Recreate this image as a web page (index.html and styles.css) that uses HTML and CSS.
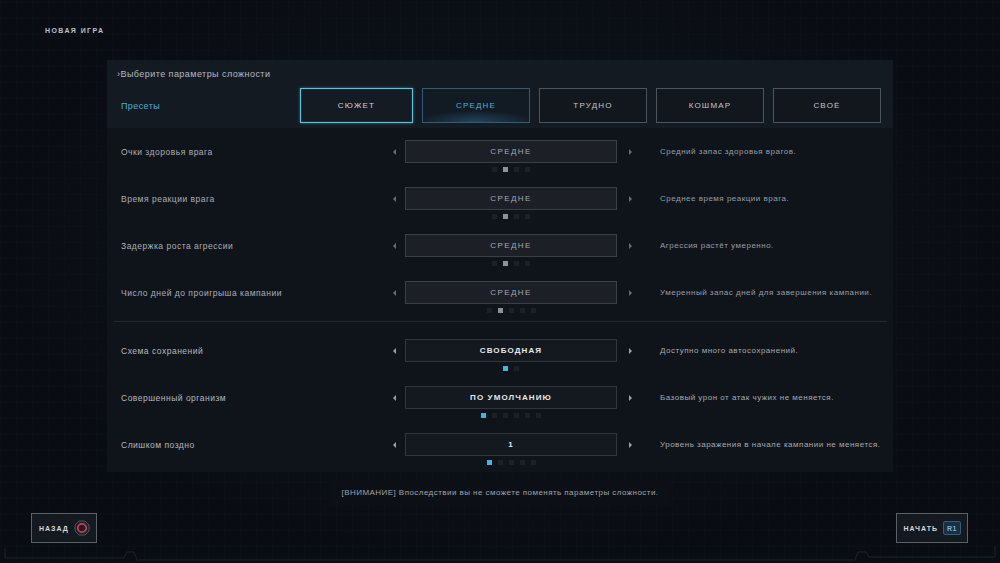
FILE: index.html
```html
<!DOCTYPE html>
<html lang="ru">
<head>
<meta charset="utf-8">
<title>Новая игра</title>
<link rel="stylesheet" href="styles.css">
</head>
<body>
<div class="screen">
  <header class="page-title">НОВАЯ ИГРА</header>

  <main class="panel">
    <section class="panel-head">
      <div class="subtitle">›Выберите параметры сложности</div>
      <div class="presets">
        <span class="presets-label">Пресеты</span>
        <div class="preset-list">
          <button class="preset preset-focus">СЮЖЕТ</button>
          <button class="preset preset-active">СРЕДНЕ</button>
          <button class="preset">ТРУДНО</button>
          <button class="preset">КОШМАР</button>
          <button class="preset">СВОЁ</button>
        </div>
      </div>
    </section>

    <section class="panel-body">
      <div class="row">
        <span class="label">Очки здоровья врага</span>
        <span class="arrow arrow-left"></span>
        <span class="value">СРЕДНЕ</span>
        <span class="arrow arrow-right"></span>
        <span class="desc">Средний запас здоровья врагов.</span>
        <span class="dots"><i></i><i class="on"></i><i></i><i></i></span>
      </div>
      <div class="row">
        <span class="label">Время реакции врага</span>
        <span class="arrow arrow-left"></span>
        <span class="value">СРЕДНЕ</span>
        <span class="arrow arrow-right"></span>
        <span class="desc">Среднее время реакции врага.</span>
        <span class="dots"><i></i><i class="on"></i><i></i><i></i></span>
      </div>
      <div class="row">
        <span class="label">Задержка роста агрессии</span>
        <span class="arrow arrow-left"></span>
        <span class="value">СРЕДНЕ</span>
        <span class="arrow arrow-right"></span>
        <span class="desc">Агрессия растёт умеренно.</span>
        <span class="dots"><i></i><i class="on"></i><i></i><i></i></span>
      </div>
      <div class="row row-last">
        <span class="label">Число дней до проигрыша кампании</span>
        <span class="arrow arrow-left"></span>
        <span class="value">СРЕДНЕ</span>
        <span class="arrow arrow-right"></span>
        <span class="desc">Умеренный запас дней для завершения кампании.</span>
        <span class="dots"><i></i><i class="on"></i><i></i><i></i><i></i></span>
      </div>

      <div class="separator"></div>

      <div class="row row-custom">
        <span class="label">Схема сохранений</span>
        <span class="arrow arrow-left"></span>
        <span class="value">СВОБОДНАЯ</span>
        <span class="arrow arrow-right"></span>
        <span class="desc">Доступно много автосохранений.</span>
        <span class="dots"><i class="on"></i><i></i></span>
      </div>
      <div class="row row-custom">
        <span class="label">Совершенный организм</span>
        <span class="arrow arrow-left"></span>
        <span class="value">ПО УМОЛЧАНИЮ</span>
        <span class="arrow arrow-right"></span>
        <span class="desc">Базовый урон от атак чужих не меняется.</span>
        <span class="dots"><i class="on"></i><i></i><i></i><i></i><i></i><i></i></span>
      </div>
      <div class="row row-custom row-last">
        <span class="label">Слишком поздно</span>
        <span class="arrow arrow-left"></span>
        <span class="value">1</span>
        <span class="arrow arrow-right"></span>
        <span class="desc">Уровень заражения в начале кампании не меняется.</span>
        <span class="dots"><i class="on"></i><i></i><i></i><i></i><i></i></span>
      </div>
    </section>
  </main>

  <div class="notice"><span>[ВНИМАНИЕ] Впоследствии вы не сможете поменять параметры сложности.</span></div>

  <footer class="footer">
    <button class="nav-btn">
      <span>НАЗАД</span>
      <svg class="btn-icon" width="16" height="16" viewBox="0 0 16 16">
        <polygon points="5,1 11,1 15,5 15,11 11,15 5,15 1,11 1,5" fill="#1b2128" stroke="#3d5860" stroke-width="1"/>
        <circle cx="8" cy="8" r="4.2" fill="none" stroke="#d8364c" stroke-width="1.8"/>
      </svg>
    </button>
    <button class="nav-btn">
      <span>НАЧАТЬ</span>
      <span class="badge">R1</span>
    </button>
  </footer>

  <svg class="frame-lines" width="1000" height="20" viewBox="0 0 1000 20">
    <path d="M5 5 V15 H124 L127 9 H134 L137 17 H855 L858 9 H866 L869 14 H995 V3" fill="none" stroke="#1a242d" stroke-width="1"/>
  </svg>
</div>
</body>
</html>
```

FILE: styles.css
```css
* { box-sizing: border-box; }

html, body {
  margin: 0;
  padding: 0;
}

body {
  background: #090d13;
  font-family: "Liberation Sans", Arial, sans-serif;
  color: #b9bec4;
  width: 1000px;
  height: 563px;
  overflow: hidden;
}

.screen {
  position: relative;
  width: 1000px;
  height: 563px;
  display: flex;
  flex-direction: column;
  background:
    radial-gradient(ellipse at 50% 45%, rgba(20, 28, 38, 0.55), rgba(0, 0, 0, 0) 70%),
    repeating-linear-gradient(0deg, rgba(255, 255, 255, 0.012) 0 1px, transparent 1px 16px),
    repeating-linear-gradient(90deg, rgba(255, 255, 255, 0.012) 0 1px, transparent 1px 16px),
    #090d13;
}

.page-title {
  padding: 26px 0 0 45px;
  height: 36px;
  font-size: 7px;
  line-height: 10px;
  letter-spacing: 1.4px;
  font-weight: bold;
  color: #b8c2cc;
}

.panel {
  margin: 24px auto 0;
  width: 786px;
  height: 412px;
  background: #0f141b;
  display: flex;
  flex-direction: column;
}

.panel-head {
  height: 68px;
  background: #141a22;
  padding: 8px 10px 0 10px;
}

.subtitle {
  height: 12px;
  font-size: 9px;
  line-height: 12px;
  letter-spacing: 0.45px;
  color: #b4bac1;
}

.presets {
  margin-top: 8px;
  display: flex;
  align-items: center;
}

.presets-label {
  width: 183px;
  padding-left: 4px;
  font-size: 9px;
  letter-spacing: 0.4px;
  color: #4aaed8;
}

.preset-list {
  display: flex;
  gap: 9px;
}

.preset {
  width: 108px;
  height: 35px;
  background: #12171e;
  border: 1px solid #4e545b;
  color: #c2c6ca;
  font-family: "Liberation Sans", Arial, sans-serif;
  font-size: 8px;
  font-weight: normal;
  letter-spacing: 1.2px;
  padding: 0;
}

.preset-focus {
  width: 113px;
  border: 1px solid #5cc4dc;
  box-shadow: 0 0 3px rgba(92, 196, 220, 0.5), inset 0 0 2px rgba(92, 196, 220, 0.35);
  background: #141b23;
  color: #cfd4d8;
}

.preset-active {
  border-color: #2f5d75;
  color: #4fb0dc;
  background:
    radial-gradient(ellipse 55% 35% at 50% 100%, rgba(60, 150, 190, 0.35), rgba(0, 0, 0, 0) 100%),
    #121a24;
}

.panel-body {
  flex: 1;
  padding: 12px 0 0 14px;
}

.row {
  display: grid;
  grid-template-columns: 272px 12px 212px 43px 1fr;
  grid-template-rows: 23px 5px;
  row-gap: 4px;
  align-items: center;
  margin-bottom: 15px;
}

.row-last {
  margin-bottom: 0;
}

.label {
  grid-column: 1;
  grid-row: 1;
  font-size: 8.5px;
  letter-spacing: 0.5px;
  color: #a9afb5;
}

.arrow {
  grid-row: 1;
  width: 0;
  height: 0;
  border-top: 3px solid transparent;
  border-bottom: 3px solid transparent;
}

.arrow-left {
  grid-column: 2;
  border-right: 3px solid #666c73;
}

.arrow-right {
  grid-column: 4;
  border-left: 3px solid #666c73;
  margin-left: 12px;
}

.value {
  grid-column: 3;
  grid-row: 1;
  height: 23px;
  border: 1px solid #3b4047;
  background: #1c2026;
  display: flex;
  align-items: center;
  justify-content: center;
  font-size: 8px;
  font-weight: normal;
  letter-spacing: 1.4px;
  color: #a3a8ae;
}

.desc {
  grid-column: 5;
  grid-row: 1;
  font-size: 8px;
  letter-spacing: 0.5px;
  color: #979da4;
}

.dots {
  grid-column: 3;
  grid-row: 2;
  display: flex;
  justify-content: center;
  gap: 6px;
  height: 5px;
}

.dots i {
  display: block;
  width: 5px;
  height: 5px;
  background: #1c2128;
}

.dots i.on {
  background: #8d9299;
}

.separator {
  height: 1px;
  background: #222a33;
  margin: 8px 6px 17px -7px;
}

.row-custom .value {
  background: #141920;
  border-color: #30363d;
  color: #e6e8ea;
  font-weight: bold;
  letter-spacing: 1.1px;
}

.row-custom .arrow-left {
  border-right-color: #9ca2a8;
}

.row-custom .arrow-right {
  border-left-color: #9ca2a8;
}

.row-custom .label {
  color: #b3b8be;
}

.row-custom .desc {
  color: #a4aab0;
}

.row-custom .dots i.on {
  background: #46b2e2;
}

.notice {
  margin-top: 8px;
  height: 25px;
  display: flex;
  justify-content: center;
}

.notice span {
  padding: 0 13px;
  background: #0c1016;
  display: flex;
  align-items: center;
  font-size: 8px;
  letter-spacing: 0.45px;
  color: #9ea4ab;
}

.footer {
  margin-top: 8px;
  display: flex;
  justify-content: space-between;
  padding: 0 32px 0 31px;
}

.nav-btn {
  height: 30px;
  display: flex;
  align-items: center;
  gap: 5px;
  padding: 0 6px 0 7px;
  background: #141920;
  border: 1px solid #5b6168;
  color: #d4d8dc;
  font-family: "Liberation Sans", Arial, sans-serif;
  font-size: 7px;
  font-weight: bold;
  letter-spacing: 1px;
}

.btn-icon {
  display: block;
}

.badge {
  height: 14px;
  padding: 0 3px;
  display: flex;
  align-items: center;
  border: 1px solid #2f5f7c;
  border-radius: 2px;
  background: #1a2f40;
  color: #76b3d8;
  font-size: 7px;
  letter-spacing: 0.5px;
}

.frame-lines {
  position: absolute;
  left: 0;
  bottom: 0;
}
```
